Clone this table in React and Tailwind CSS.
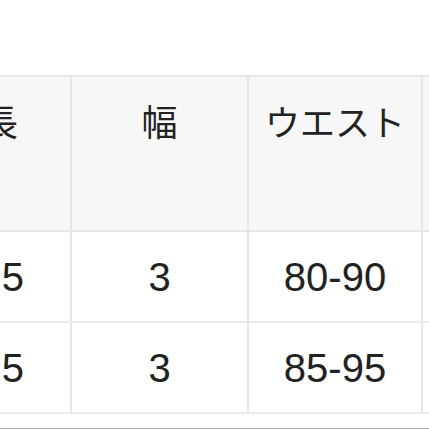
export default function App() {
  const rows = [
    ['5', '3', '80-90', ''],
    ['5', '3', '85-95', ''],
  ]
  const font = { fontFamily: '"Liberation Sans", "Noto Sans CJK JP", sans-serif' }

  return (
    <div className="w-[429px] h-[429px] overflow-hidden bg-white flex flex-col" style={font}>
      <div className="h-[75px] shrink-0" />
      <div className="ml-[-107px] w-[720px] border-t-2 border-[#e8e8e8]">
        {/* Header */}
        <div className="grid grid-cols-[179px_177px_174px_190px] h-[155px] bg-[#f7f7f7] border-b-2 border-[#e8e8e8]">
          <div className="flex justify-end pr-[52px] pt-[24px] text-[36px] leading-[46px] text-[#222] border-r-2 border-[#e6e6e6]">
            長
          </div>
          <div className="flex justify-center pt-[24px] text-[36px] leading-[46px] text-[#222] border-r-2 border-[#e6e6e6]">
            幅
          </div>
          <div className="flex justify-center pt-[24px] text-[35px] leading-[46px] text-[#222] border-r-2 border-[#e6e6e6]">
            ウエスト
          </div>
          <div />
        </div>
        {/* Body */}
        {rows.map((r, ri) => (
          <div
            key={ri}
            className="grid grid-cols-[179px_177px_174px_190px] h-[91px] bg-white border-b-2 border-[#ebebeb]"
          >
            <div className="flex items-center justify-end pr-[46px] text-[40px] text-[#222] border-r-2 border-[#e6e6e6]">
              {r[0]}
            </div>
            <div className="flex items-center justify-center text-[40px] text-[#222] border-r-2 border-[#e6e6e6]">
              {r[1]}
            </div>
            <div className="flex items-center justify-center text-[40px] text-[#222] border-r-2 border-[#e6e6e6]">
              {r[2]}
            </div>
            <div />
          </div>
        ))}
      </div>
      <div className="flex-1" />
      <div className="h-px bg-[#b0b0b0]" />
    </div>
  )
}
